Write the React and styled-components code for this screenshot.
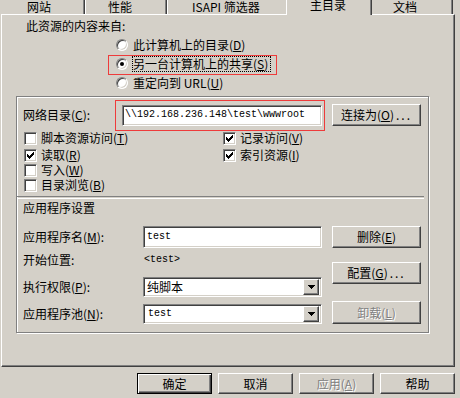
import React from "react";
import styled, { createGlobalStyle, css } from "styled-components";

const Global = createGlobalStyle`
  html, body {
    margin: 0;
    padding: 0;
    background: #d4d0c8;
  }
  body {
    font-family: "Noto Sans CJK SC", "Noto Sans", sans-serif;
    font-size: 12px;
    line-height: 14px;
    color: #000;
  }
`;

const sunken = css`
  box-sizing: border-box;
  background: #fff;
  border: 1px solid;
  border-color: #808080 #fff #fff #808080;
  box-shadow: inset 1px 1px #404040, inset -1px -1px #d4d0c8;
`;

const raised = css`
  box-sizing: border-box;
  background: #d4d0c8;
  border: 1px solid;
  border-color: #fff #404040 #404040 #fff;
  box-shadow: inset -1px -1px #808080;
`;

const Dialog = styled.div`
  width: 460px;
  height: 398px;
  background: #d4d0c8;
  overflow: hidden;
  display: flex;
  flex-direction: column;
`;

const TabStrip = styled.div`
  display: flex;
  align-items: flex-start;
  height: 14px;
  margin-left: -1px;
  position: relative;
  z-index: 1;
`;

const Tab = styled.div`
  box-sizing: border-box;
  flex: none;
  width: ${(p) => p.$w}px;
  height: ${(p) => (p.$active ? 17 : 14)}px;
  margin: ${(p) => (p.$active ? "-2px -2px 0 -2px" : "0")};
  padding-left: ${(p) => p.$pad}px;
  border-left: 1px solid #fff;
  border-right: 1px solid #404040;
  box-shadow: inset -1px 0 #808080;
  background: #d4d0c8;
  white-space: nowrap;
  position: relative;
  z-index: ${(p) => (p.$active ? 2 : 1)};
`;

const Panel = styled.div`
  box-sizing: border-box;
  margin-left: 1px;
  width: 454px;
  height: 353px;
  border: 1px solid;
  border-color: #fff #404040 #404040 #fff;
  box-shadow: inset -1px -1px #808080;
  display: flex;
  flex-direction: column;
  align-items: flex-start;
`;

const SourceTitle = styled.div`
  margin: 4px 0 0 24px;
  height: 14px;
`;

const RadioList = styled.div`
  margin: 2px 0 0 114px;
  display: flex;
  flex-direction: column;
  align-items: flex-start;
`;

const RadioRow = styled.div`
  position: relative;
  display: flex;
  align-items: center;
  height: 19px;

  ${(p) =>
    p.$marked &&
    css`
      &::after {
        content: "";
        position: absolute;
        left: -8px;
        right: -6px;
        top: 1px;
        bottom: -2px;
        border: 1px solid #ee3b3b;
        pointer-events: none;
      }
    `}
`;

const RadioDot = styled.span`
  box-sizing: border-box;
  flex: none;
  width: 12px;
  height: 12px;
  border-radius: 50%;
  background: #fff;
  border: 1px solid;
  border-color: #808080 #fff #fff #808080;
  box-shadow: inset 1px 1px #404040, inset -1px -1px #d4d0c8;
  display: flex;
  align-items: center;
  justify-content: center;
  margin-right: 4px;

  &::after {
    content: "";
    display: ${(p) => (p.$on ? "block" : "none")};
    width: 4px;
    height: 4px;
    border-radius: 50%;
    background: #000;
  }
`;

const RadioText = styled.span`
  border: 1px ${(p) => (p.$focus ? "dotted #000" : "solid transparent")};
  padding-right: 2px;
  white-space: nowrap;
`;

const Acc = styled.span`
  text-decoration: underline;
`;

const GroupBox = styled.div`
  box-sizing: border-box;
  margin: 4px 0 0 14px;
  width: 413px;
  height: 237px;
  border: 1px solid #808080;
  box-shadow: inset 1px 1px #fff, 1px 1px #fff;
  padding: 7px 0 0 6px;
  display: flex;
  flex-direction: column;
`;

const NetRow = styled.div`
  display: flex;
  align-items: center;
  height: 22px;
`;

const Label = styled.span`
  flex: none;
  width: ${(p) => p.$w}px;
  white-space: nowrap;
`;

const Marked = styled.div`
  position: relative;
  display: flex;

  &::after {
    content: "";
    position: absolute;
    left: -7px;
    right: -3px;
    top: -5px;
    bottom: -5px;
    border: 1px solid #ee3b3b;
    pointer-events: none;
  }
`;

const TextBox = styled.div`
  ${sunken};
  width: ${(p) => p.$w}px;
  height: ${(p) => p.$h}px;
  padding-left: ${(p) => p.$pl}px;
  display: flex;
  align-items: center;
  font-family: "Liberation Mono", "DejaVu Sans Mono", monospace;
  font-size: 10px;
  white-space: nowrap;
  overflow: hidden;
`;

const Button = styled.div`
  ${raised};
  flex: none;
  width: ${(p) => p.$w}px;
  height: ${(p) => p.$h}px;
  margin-top: ${(p) => p.$mt || 0}px;
  display: flex;
  align-items: center;
  justify-content: center;
  white-space: nowrap;
  ${(p) =>
    p.$disabled &&
    css`
      color: #808080;
      text-shadow: 1px 1px 0 #fff;
    `}
  ${(p) =>
    p.$default &&
    css`
      border: 1px solid #000;
      box-shadow: inset 1px 1px #fff, inset -1px -1px #404040,
        inset -2px -2px #808080;
    `}
`;

const Dots = styled.span`
  letter-spacing: 2px;
  margin-left: 2px;
`;

const CheckGrid = styled.div`
  margin: 5px 0 0 1px;
  display: grid;
  grid-template-columns: 199px 1fr;
  grid-template-rows: 17px 15px 15px 15px;
  align-items: start;
`;

const CheckItem = styled.div`
  display: flex;
  align-items: center;
  height: 14px;
  white-space: nowrap;
`;

const CheckBox = styled.span`
  ${sunken};
  flex: none;
  width: 13px;
  height: 13px;
  margin-right: 4px;
  display: flex;
  align-items: center;
  justify-content: center;
`;

const Separator = styled.div`
  margin: 3px 0 0 -6px;
  width: 407px;
  height: 1px;
  border-top: 1px solid #808080;
  border-bottom: 1px solid #fff;
`;

const SectionTitle = styled.div`
  margin-top: 2px;
  height: 14px;
`;

const AppArea = styled.div`
  margin-top: 11px;
  display: flex;
`;

const FieldCol = styled.div`
  width: 299px;
  display: flex;
  flex-direction: column;
`;

const FieldRow = styled.div`
  display: flex;
  align-items: center;
  height: ${(p) => p.$h}px;
  margin-top: ${(p) => p.$mt || 0}px;
`;

const PlainValue = styled.span`
  margin-left: 1px;
  font-family: "Liberation Mono", "DejaVu Sans Mono", monospace;
  font-size: 10px;
`;

const ButtonCol = styled.div`
  margin-left: 10px;
  display: flex;
  flex-direction: column;
`;

const Select = styled.div`
  ${sunken};
  width: 179px;
  height: 20px;
  padding: 2px 2px 2px 3px;
  display: flex;
  align-items: center;
`;

const SelectText = styled.span`
  flex: 1;
  white-space: nowrap;
  ${(p) =>
    p.$mono &&
    css`
      font-family: "Liberation Mono", "DejaVu Sans Mono", monospace;
      font-size: 10px;
      padding-left: 1px;
    `}
`;

const DropButton = styled.span`
  ${raised};
  flex: none;
  width: 16px;
  height: 16px;
  display: flex;
  align-items: center;
  justify-content: center;
`;

const Footer = styled.div`
  margin-top: 6px;
  padding-right: 5px;
  display: flex;
  justify-content: flex-end;
  gap: 6px;
`;

const CheckMark = () => (
  <svg width="7" height="7" viewBox="0 0 7 7" shapeRendering="crispEdges">
    {[2, 3, 4, 3, 2, 1, 0].map((y, x) => (
      <rect key={x} x={x} y={y} width="1" height="3" fill="#000" />
    ))}
  </svg>
);

const Arrow = () => (
  <svg width="7" height="4" viewBox="0 0 7 4" shapeRendering="crispEdges">
    <rect x="0" y="0" width="7" height="1" fill="#000" />
    <rect x="1" y="1" width="5" height="1" fill="#000" />
    <rect x="2" y="2" width="3" height="1" fill="#000" />
    <rect x="3" y="3" width="1" height="1" fill="#000" />
  </svg>
);

const tabs = [
  { label: "网站", w: 86, pad: 27 },
  { label: "性能", w: 82, pad: 22 },
  { label: "ISAPI 筛选器", w: 121, pad: 24 },
  { label: "主目录", w: 86, pad: 23, active: true },
  { label: "文档", w: 83, pad: 22 },
];

const Check = ({ on, children }) => (
  <CheckItem>
    <CheckBox>{on && <CheckMark />}</CheckBox>
    {children}
  </CheckItem>
);

const App = () => {
  return (
    <Dialog>
      <Global />
      <TabStrip>
        {tabs.map((t) => (
          <Tab key={t.label} $w={t.w} $pad={t.pad} $active={t.active}>
            {t.label}
          </Tab>
        ))}
      </TabStrip>

      <Panel>
        <SourceTitle>此资源的内容来自:</SourceTitle>
        <RadioList>
          <RadioRow>
            <RadioDot />
            <RadioText>
              此计算机上的目录(<Acc>D</Acc>)
            </RadioText>
          </RadioRow>
          <RadioRow $marked>
            <RadioDot $on />
            <RadioText $focus>
              另一台计算机上的共享(<Acc>S</Acc>)
            </RadioText>
          </RadioRow>
          <RadioRow>
            <RadioDot />
            <RadioText>
              重定向到 URL(<Acc>U</Acc>)
            </RadioText>
          </RadioRow>
        </RadioList>

        <GroupBox>
          <NetRow>
            <Label $w={99}>
              网络目录(<Acc>C</Acc>):
            </Label>
            <Marked>
              <TextBox $w={200} $h={21} $pl={2}>
                {"\\\\192.168.236.148\\test\\wwwroot"}
              </TextBox>
            </Marked>
            <Button $w={89} $h={22} style={{ marginLeft: 10 }}>
              连接为(<Acc>O</Acc>)<Dots>...</Dots>
            </Button>
          </NetRow>

          <CheckGrid>
            <Check>
              脚本资源访问(<Acc>T</Acc>)
            </Check>
            <Check on>
              记录访问(<Acc>V</Acc>)
            </Check>
            <Check on>
              读取(<Acc>R</Acc>)
            </Check>
            <Check on>
              索引资源(<Acc>I</Acc>)
            </Check>
            <Check>
              写入(<Acc>W</Acc>)
            </Check>
            <span />
            <Check>
              目录浏览(<Acc>B</Acc>)
            </Check>
          </CheckGrid>

          <Separator />
          <SectionTitle>应用程序设置</SectionTitle>

          <AppArea>
            <FieldCol>
              <FieldRow $h={22}>
                <Label $w={120}>
                  应用程序名(<Acc>M</Acc>):
                </Label>
                <TextBox $w={179} $h={22} $pl={3}>
                  test
                </TextBox>
              </FieldRow>
              <FieldRow $h={18} $mt={3}>
                <Label $w={120}>开始位置:</Label>
                <PlainValue>&lt;test&gt;</PlainValue>
              </FieldRow>
              <FieldRow $h={20} $mt={8}>
                <Label $w={120}>
                  执行权限(<Acc>P</Acc>):
                </Label>
                <Select>
                  <SelectText>纯脚本</SelectText>
                  <DropButton>
                    <Arrow />
                  </DropButton>
                </Select>
              </FieldRow>
              <FieldRow $h={20} $mt={7}>
                <Label $w={120}>
                  应用程序池(<Acc>N</Acc>):
                </Label>
                <Select>
                  <SelectText $mono>test</SelectText>
                  <DropButton>
                    <Arrow />
                  </DropButton>
                </Select>
              </FieldRow>
            </FieldCol>

            <ButtonCol>
              <Button $w={89} $h={22}>
                删除(<Acc>E</Acc>)
              </Button>
              <Button $w={89} $h={22} $mt={14}>
                配置(<Acc>G</Acc>)<Dots>...</Dots>
              </Button>
              <Button $w={89} $h={23} $mt={17} $disabled>
                卸载(<Acc>L</Acc>)
              </Button>
            </ButtonCol>
          </AppArea>
        </GroupBox>
      </Panel>

      <Footer>
        <Button $w={75} $h={21} $default>
          确定
        </Button>
        <Button $w={75} $h={21}>
          取消
        </Button>
        <Button $w={75} $h={21} $disabled>
          应用(<Acc>A</Acc>)
        </Button>
        <Button $w={75} $h={21}>
          帮助
        </Button>
      </Footer>
    </Dialog>
  );
};

export default App;
